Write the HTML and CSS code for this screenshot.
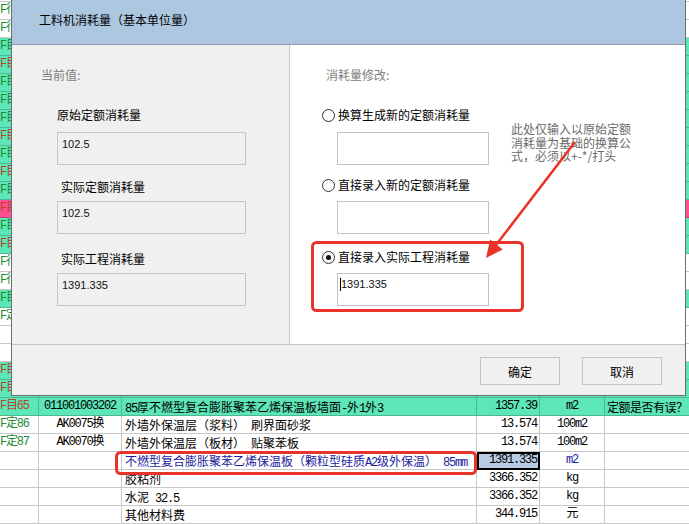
FILE: index.html
```html
<!DOCTYPE html>
<html lang="zh">
<head>
<meta charset="utf-8">
<title>工料机消耗量</title>
<link rel="stylesheet" href="styles.css">
</head>
<body>
<div class="sheet">
  <div class="row w"><div class="c c1 tg"></div><div class="c c2"></div><div class="c c3"></div><div class="c c4"></div><div class="c c5"></div><div class="c c6"></div></div>
  <div class="row w"><div class="c c1 tg">F行</div><div class="c c2"></div><div class="c c3"></div><div class="c c4"></div><div class="c c5"></div><div class="c c6"></div></div>
  <div class="row w"><div class="c c1 tg">F行</div><div class="c c2"></div><div class="c c3"></div><div class="c c4"></div><div class="c c5"></div><div class="c c6"></div></div>
  <div class="row gr"><div class="c c1 tg">F目</div><div class="c c2"></div><div class="c c3"></div><div class="c c4"></div><div class="c c5"></div><div class="c c6"></div></div>
  <div class="row gr"><div class="c c1 tr">F目</div><div class="c c2"></div><div class="c c3"></div><div class="c c4"></div><div class="c c5"></div><div class="c c6"></div></div>
  <div class="row gr"><div class="c c1 tg">F目</div><div class="c c2"></div><div class="c c3"></div><div class="c c4"></div><div class="c c5"></div><div class="c c6"></div></div>
  <div class="row gr"><div class="c c1 tg">F目</div><div class="c c2"></div><div class="c c3"></div><div class="c c4"></div><div class="c c5"></div><div class="c c6"></div></div>
  <div class="row gr"><div class="c c1 tg">F目</div><div class="c c2"></div><div class="c c3"></div><div class="c c4"></div><div class="c c5"></div><div class="c c6"></div></div>
  <div class="row gr"><div class="c c1 tr">F目</div><div class="c c2"></div><div class="c c3"></div><div class="c c4"></div><div class="c c5"></div><div class="c c6"></div></div>
  <div class="row gr"><div class="c c1 tg">F目</div><div class="c c2"></div><div class="c c3"></div><div class="c c4"></div><div class="c c5"></div><div class="c c6"></div></div>
  <div class="row gr"><div class="c c1 tr">F目</div><div class="c c2"></div><div class="c c3"></div><div class="c c4"></div><div class="c c5"></div><div class="c c6"></div></div>
  <div class="row gr"><div class="c c1 tg">F目</div><div class="c c2"></div><div class="c c3"></div><div class="c c4"></div><div class="c c5"></div><div class="c c6"></div></div>
  <div class="row pk"><div class="c c1 tr">F目</div><div class="c c2"></div><div class="c c3"></div><div class="c c4"></div><div class="c c5"></div><div class="c c6"></div></div>
  <div class="row gr"><div class="c c1 tg">F目</div><div class="c c2"></div><div class="c c3"></div><div class="c c4"></div><div class="c c5"></div><div class="c c6"></div></div>
  <div class="row gr"><div class="c c1 tr">F目</div><div class="c c2"></div><div class="c c3"></div><div class="c c4"></div><div class="c c5"></div><div class="c c6"></div></div>
  <div class="row w"><div class="c c1 tg">F行</div><div class="c c2"></div><div class="c c3"></div><div class="c c4"></div><div class="c c5"></div><div class="c c6"></div></div>
  <div class="row w"><div class="c c1 tg">F行</div><div class="c c2"></div><div class="c c3"></div><div class="c c4"></div><div class="c c5"></div><div class="c c6"></div></div>
  <div class="row gr"><div class="c c1 tg">F目</div><div class="c c2"></div><div class="c c3"></div><div class="c c4"></div><div class="c c5"></div><div class="c c6"></div></div>
  <div class="row w"><div class="c c1 tg">F定</div><div class="c c2"></div><div class="c c3"></div><div class="c c4"></div><div class="c c5"></div><div class="c c6"></div></div>
  <div class="row w"><div class="c c1"></div><div class="c c2"></div><div class="c c3"></div><div class="c c4"></div><div class="c c5"></div><div class="c c6"></div></div>
  <div class="row w"><div class="c c1"></div><div class="c c2"></div><div class="c c3"></div><div class="c c4"></div><div class="c c5"></div><div class="c c6"></div></div>
  <div class="row gr"><div class="c c1 tr">F目</div><div class="c c2"></div><div class="c c3"></div><div class="c c4"></div><div class="c c5"></div><div class="c c6"></div></div>
  <div class="row gr"><div class="c c1 tr">F目</div><div class="c c2"></div><div class="c c3"></div><div class="c c4"></div><div class="c c5"></div><div class="c c6"></div></div>
  <div class="row gr"><div class="c c1 tr">F目65</div><div class="c c2">011001003202</div><div class="c c3"><span class="a">85</span>厚不燃型复合膨胀聚苯乙烯保温板墙面<span class="a">-</span>外<span class="a">1</span>外<span class="a">3</span></div><div class="c c4">1357.39</div><div class="c c5">m2</div><div class="c c6 q">定额是否有误？</div></div>
  <div class="row w"><div class="c c1 tg">F定86</div><div class="c c2">AK0075换</div><div class="c c3">外墙外保温层（浆料）<span class="a"> </span>刷界面砂浆</div><div class="c c4">13.574</div><div class="c c5">100m2</div><div class="c c6"></div></div>
  <div class="row w"><div class="c c1 tg">F定87</div><div class="c c2">AK0070换</div><div class="c c3">外墙外保温层（板材）<span class="a"> </span>贴聚苯板</div><div class="c c4">13.574</div><div class="c c5">100m2</div><div class="c c6"></div></div>
  <div class="row w"><div class="c c1"></div><div class="c c2"></div><div class="c c3 blue">不燃型复合膨胀聚苯乙烯保温板（颗粒型硅质<span class="a">A2</span>级外保温）<span class="a"> 85mm</span></div><div class="c c4 sel">1391.335</div><div class="c c5 blue">m2</div><div class="c c6"></div></div>
  <div class="row w"><div class="c c1"></div><div class="c c2"></div><div class="c c3">胶粘剂</div><div class="c c4">3366.352</div><div class="c c5">kg</div><div class="c c6"></div></div>
  <div class="row w"><div class="c c1"></div><div class="c c2"></div><div class="c c3">水泥<span class="a"> 32.5</span></div><div class="c c4">3366.352</div><div class="c c5">kg</div><div class="c c6"></div></div>
  <div class="row w"><div class="c c1"></div><div class="c c2"></div><div class="c c3">其他材料费</div><div class="c c4">344.915</div><div class="c c5">元</div><div class="c c6"></div></div>
</div>

<div class="dialog">
  <div class="titlebar">工料机消耗量（基本单位量）</div>
  <div class="dlg-body">
    <div class="pane-current">
      <div class="legend">当前值:</div>
      <div class="label label-a">原始定额消耗量</div>
      <div class="box box-a">102.5</div>
      <div class="label label-b">实际定额消耗量</div>
      <div class="box box-b">102.5</div>
      <div class="label label-c">实际工程消耗量</div>
      <div class="box box-b">1391.335</div>
    </div>
    <div class="pane-edit">
      <div class="form">
        <div class="legend legend-edit">消耗量修改:</div>
        <div class="radio r1"><span class="dot"></span>换算生成新的定额消耗量</div>
        <div class="input i1"></div>
        <div class="radio r2"><span class="dot"></span>直接录入新的定额消耗量</div>
        <div class="input i2"></div>
        <div class="radio r3"><span class="dot on"></span>直接录入实际工程消耗量</div>
        <div class="input i3"><span class="caret"></span>1391.335</div>
      </div>
      <div class="note">此处仅输入以原始定额<br>消耗量为基础的换算公<br>式，必须以+-*/打头</div>
    </div>
  </div>
  <div class="footer">
    <button class="btn">确定</button>
    <button class="btn">取消</button>
  </div>
</div>

<svg class="annot" viewBox="0 0 689 524" width="689" height="524">
  <rect x="312.5" y="242.5" width="210" height="68" rx="4" ry="4" fill="none" stroke="#e8332a" stroke-width="3"/>
  <rect x="116.5" y="452.5" width="359" height="21" rx="4" ry="4" fill="none" stroke="#e8332a" stroke-width="3"/>
  <line x1="575" y1="142" x2="496" y2="245" stroke="#e8332a" stroke-width="2.5"/>
  <polygon points="486,258 502.7,249.4 490.1,239.6" fill="#e8332a"/>
</svg>
</body>
</html>
```

FILE: styles.css
```css
html, body {
  margin: 0;
  padding: 0;
  overflow: hidden;
  background: #ffffff;
}

body {
  position: relative;
  width: 689px;
  height: 524px;
  font-family: "Noto Sans CJK SC", "Noto Sans", sans-serif;
  font-size: 12px;
  color: #000;
}

/* ---------- background spreadsheet ---------- */
.sheet {
  margin-top: -16px;
}

.row {
  display: grid;
  grid-template-columns: 39px 83px 355px 63px 65px 1fr;
  height: 18px;
}

.row.w { background: #ffffff; }
.row.gr { background: #5de6b7; }
.row.pk { background: #ff4f92; }

.c {
  box-sizing: border-box;
  height: 18px;
  line-height: 17px;
  border-right: 1px solid rgba(0, 0, 0, 0.2);
  border-bottom: 1px solid rgba(0, 0, 0, 0.2);
  white-space: nowrap;
  overflow: hidden;
}

.row.w .c { border-color: #c8c8c8; }

.c1, .c2, .c4, .c5, .a {
  font-family: "Liberation Mono", "Noto Sans CJK SC", monospace;
  letter-spacing: -1.2px;
}

.a { white-space: pre; }

.c2 { text-align: center; }
.c3 { padding-left: 3px; }
.c4 { text-align: right; padding-right: 2px; }
.c5 { text-align: center; }
.c6 { padding-left: 2px; border-right: 0; }
.q { letter-spacing: -0.5px; }

.tg { color: #1e8a34; }
.tr { color: #b8432b; }
.blue { color: #1c1c9c; }

.sel {
  background: #b8cce4;
  outline: 2px solid #000;
  outline-offset: -2px;
}

/* ---------- dialog ---------- */
.dialog {
  position: absolute;
  left: 11px;
  top: -1px;
  width: 675px;
  height: 397px;
  box-sizing: border-box;
  border: 1px solid #6e6e6e;
  background: #f0f0f0;
  display: flex;
  flex-direction: column;
}

.titlebar {
  height: 45px;
  box-sizing: border-box;
  border-bottom: 1px solid #8c9bae;
  background: #adc7e1;
  padding: 12px 0 0 27px;
  line-height: 16px;
  color: #000;
}

.dlg-body {
  display: flex;
  height: 299px;
}

.pane-current {
  width: 278px;
  box-sizing: border-box;
  border-right: 1px solid #c8c8c8;
  background: #f0f0f0;
  padding: 22px 0 0 29px;
  display: flex;
  flex-direction: column;
  align-items: flex-start;
}

.legend {
  line-height: 16px;
  color: #7d7d7d;
}

.label {
  line-height: 16px;
  color: #000;
}

.label-a { margin: 24px 0 0 16px; }
.label-b { margin: 14px 0 0 20px; }
.label-c { margin: 17px 0 0 20px; }

.box {
  width: 189px;
  height: 33px;
  box-sizing: border-box;
  border: 1px solid #c6c6c6;
  padding: 5px 0 0 4px;
  font-family: "Liberation Sans", sans-serif;
  font-size: 11px;
  line-height: 13px;
  color: #111;
}

.box-a { margin: 9px 0 0 16px; }
.box-b { margin: 6px 0 0 16px; }

.pane-edit {
  flex: 1;
  background: #ffffff;
  display: flex;
  padding: 22px 0 0 32px;
}

.form {
  width: 189px;
  display: flex;
  flex-direction: column;
  align-items: flex-start;
}

.legend-edit { margin-left: 4px; }

.radio {
  display: flex;
  align-items: center;
  gap: 3px;
  height: 16px;
  line-height: 16px;
  white-space: nowrap;
}

.r1 { margin-top: 24px; }
.r2 { margin-top: 12px; }
.r3 { margin-top: 15px; }

.dot {
  position: relative;
  width: 13px;
  height: 13px;
  box-sizing: border-box;
  border: 1px solid #333;
  border-radius: 50%;
  background: #fff;
  flex: none;
}

.dot.on::after {
  content: "";
  position: absolute;
  left: 3px;
  top: 3px;
  width: 5px;
  height: 5px;
  border-radius: 50%;
  background: #111;
}

.input {
  width: 152px;
  height: 33px;
  box-sizing: border-box;
  border: 1px solid #c3c3c3;
  background: #fff;
  margin-left: 15px;
  padding: 4px 0 0 2px;
  font-family: "Liberation Sans", sans-serif;
  font-size: 11px;
  line-height: 13px;
  color: #111;
  display: flex;
  align-items: flex-start;
}

.i1 { margin-top: 9px; }
.i2 { margin-top: 8px; }
.i3 { margin-top: 8px; }

.caret {
  display: block;
  width: 1px;
  height: 13px;
  background: #000;
}

.note {
  margin-top: 55px;
  color: #6a6a6a;
  font-size: 12px;
  line-height: 13.5px;
  white-space: nowrap;
}

.footer {
  height: 51px;
  box-sizing: border-box;
  border-top: 1px solid #c3c3c3;
  background: #f0f0f0;
  padding: 12px 23px 0 0;
  display: flex;
  justify-content: flex-end;
  align-items: flex-start;
  gap: 22px;
}

.btn {
  width: 80px;
  height: 28px;
  box-sizing: border-box;
  border: 1px solid #c4c4c4;
  background: #f0f0f0;
  padding: 0;
  font-family: "Noto Sans CJK SC", sans-serif;
  font-size: 12px;
  color: #000;
}

/* ---------- annotation overlay ---------- */
.annot {
  position: absolute;
  left: 0;
  top: 0;
  pointer-events: none;
}
```
